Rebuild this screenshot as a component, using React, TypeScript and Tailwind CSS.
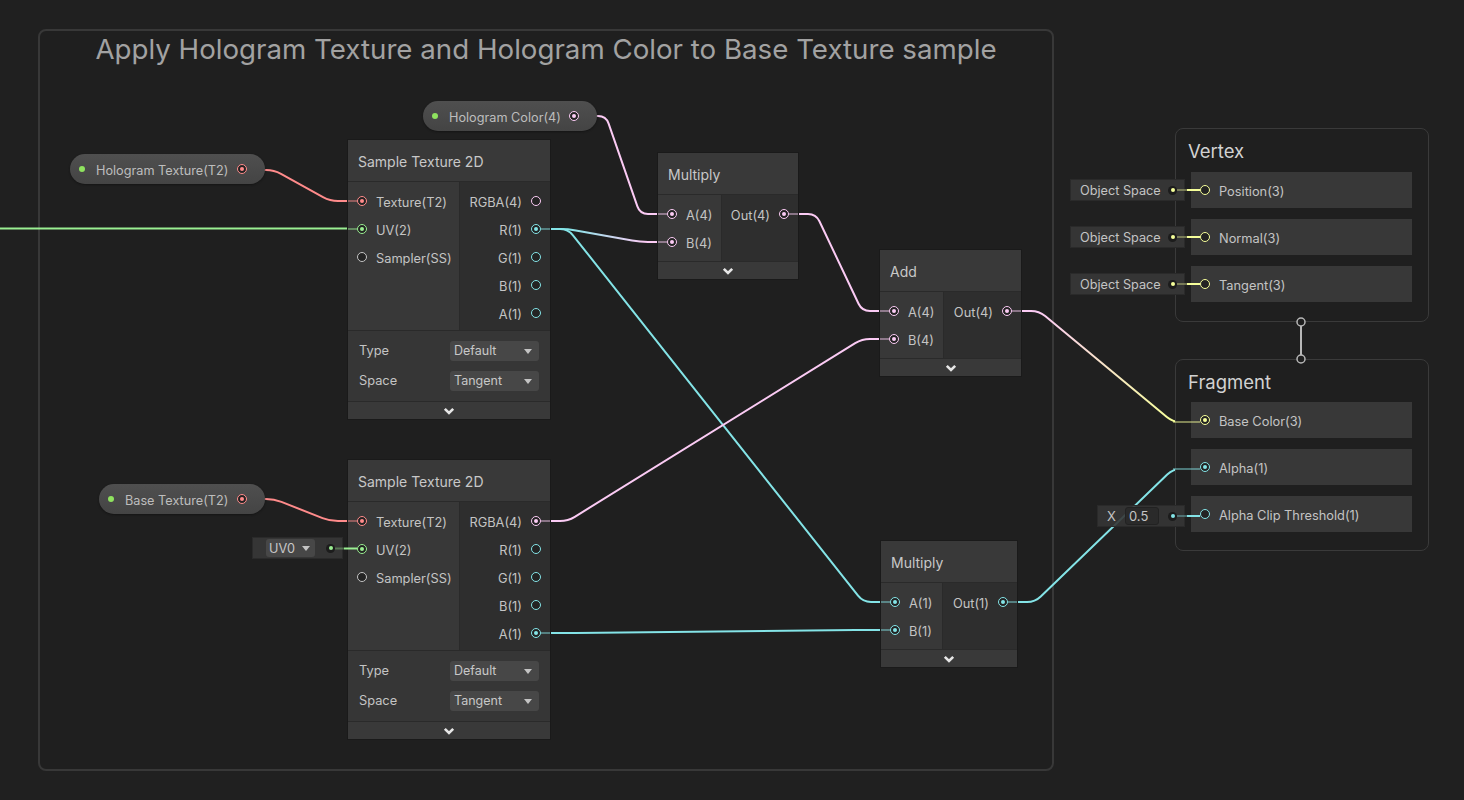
import React from "react";

type Kind = "v1" | "v2" | "v3" | "v4" | "tex" | "ss";

const ring: Record<Kind, string> = {
  v1: "border-[#84e4e7]",
  v2: "border-[#9aef92]",
  v3: "border-[#f6ff9a]",
  v4: "border-[#fbcbf4]",
  tex: "border-[#ff8b8b]",
  ss: "border-[#c4c4c4]",
};

const dot: Record<Kind, string> = {
  v1: "bg-[#84e4e7]",
  v2: "bg-[#9aef92]",
  v3: "bg-[#f6ff9a]",
  v4: "bg-[#fbcbf4]",
  tex: "bg-[#ff8b8b]",
  ss: "bg-[#c4c4c4]",
};

const hex: Record<Kind, string> = {
  v1: "#84e4e7",
  v2: "#9aef92",
  v3: "#f6ff9a",
  v4: "#fbcbf4",
  tex: "#ff8b8b",
  ss: "#c4c4c4",
};

type P = { label: string; kind: Kind; on?: boolean };

function Port({ kind, on }: { kind: Kind; on?: boolean }) {
  return (
    <span
      className={`flex h-[10px] w-[10px] shrink-0 items-center justify-center rounded-full border-[1.5px] bg-[#232323] ${ring[kind]}`}
    >
      {on && <span className={`h-[4px] w-[4px] rounded-full ${dot[kind]}`} />}
    </span>
  );
}

// small dark knob used by inline property drawers
function Knob({ kind }: { kind: Kind }) {
  return (
    <span className="flex h-[9px] w-[9px] items-center justify-center rounded-full bg-[#1c1c1c]">
      <span className={`h-[4px] w-[4px] rounded-full ${dot[kind]}`} />
    </span>
  );
}

function Chevron() {
  return (
    <svg width="12" height="8" viewBox="0 0 12 8">
      <polyline points="1.8,1.8 6,6 10.2,1.8" fill="none" stroke="#e6e6e6" strokeWidth="2.6" />
    </svg>
  );
}

function Caret() {
  return (
    <svg width="8" height="5" viewBox="0 0 8 5">
      <polygon points="0,0 8,0 4,5" fill="#c4c4c4" />
    </svg>
  );
}

function Dropdown({ value }: { value: string }) {
  return (
    <div className="flex h-[20px] w-[89px] items-center justify-between rounded-[3px] bg-[#474747] pl-[4px] pr-[7px] text-[12.5px] text-[#c8c8c8]">
      <span className="pt-[1px]">{value}</span>
      <Caret />
    </div>
  );
}

function Node({
  pos,
  title,
  ins,
  outs,
  inW,
  bodyPb,
  controls,
}: {
  pos: string;
  title: string;
  ins: P[];
  outs: P[];
  inW: string;
  bodyPb: string;
  controls?: { label: string; value: string }[];
}) {
  return (
    <div className={`absolute flex flex-col bg-[#2e2e2e] shadow-[0_0_0_1px_#1a1a1a] ${pos}`}>
      <div className="flex h-[42px] items-center border-b border-[#2a2a2a] bg-[#393939] px-[10px] pt-[1px] text-[14px] text-[#c8c8c8]">
        {title}
      </div>
      <div className="flex">
        <div className={`flex flex-col border-r border-[#2a2a2a] bg-[#383838] pt-[5px] ${bodyPb} ${inW}`}>
          {ins.map((p) => (
            <div key={p.label} className="flex h-[28px] items-center gap-[9px] pl-[9px] text-[12.8px] text-[#c4c4c4]">
              <Port kind={p.kind} on={p.on} />
              <span className="pt-[3px]">{p.label}</span>
            </div>
          ))}
        </div>
        <div className={`flex flex-1 flex-col pt-[5px] ${bodyPb}`}>
          {outs.map((p) => (
            <div key={p.label} className="flex h-[28px] items-center justify-end gap-[9px] pr-[9px] text-[12.8px] text-[#c4c4c4]">
              <span className="pt-[3px]">{p.label}</span>
              <Port kind={p.kind} on={p.on} />
            </div>
          ))}
        </div>
      </div>
      {controls && (
        <div className="flex flex-col gap-[10px] border-t border-[#2a2a2a] bg-[#363636] px-[11px] py-[10px]">
          {controls.map((c) => (
            <div key={c.label} className="flex h-[20px] items-center justify-between text-[12.8px] text-[#c4c4c4]">
              {c.label}
              <Dropdown value={c.value} />
            </div>
          ))}
        </div>
      )}
      <div className="flex h-[18px] items-center justify-center border-t border-[#2a2a2a] bg-[#393939]">
        <Chevron />
      </div>
    </div>
  );
}

function Pill({ pos, label, kind }: { pos: string; label: string; kind: Kind }) {
  return (
    <div
      className={`absolute flex h-[30px] items-center rounded-full bg-gradient-to-b from-[#4f4f4f] to-[#444444] pl-[9px] pr-[18px] text-[12.7px] text-[#bdbdbd] shadow-[0_1px_2px_#151515] ${pos}`}
    >
      <span className="h-[6px] w-[6px] rounded-full bg-[#8fe35f]" />
      <span className="ml-[11px] flex-1 pt-[3px]">{label}</span>
      <Port kind={kind} on />
    </div>
  );
}

function MasterBlock({
  pos,
  title,
  titleH,
  rows,
}: {
  pos: string;
  title: string;
  titleH: string;
  rows: P[];
}) {
  return (
    <div className={`absolute flex flex-col rounded-[8px] border border-[#3a3a3a] bg-[#1f1f1f] ${pos}`}>
      <div className={`flex items-center px-[12px] pt-[3px] text-[18.5px] text-[#d2d2d2] ${titleH}`}>{title}</div>
      <div className="flex flex-col gap-[11px] pl-[15px] pr-[16px]">
        {rows.map((r) => (
          <div key={r.label} className="flex h-[36px] items-center gap-[9px] bg-[#383838] pl-[9px] text-[12.8px] text-[#c4c4c4]">
            <Port kind={r.kind} on={r.on} />
            <span className="pt-[4px]">{r.label}</span>
          </div>
        ))}
      </div>
    </div>
  );
}

function ObjectSpace({ pos }: { pos: string }) {
  return (
    <div
      className={`absolute flex h-[22px] w-[115px] items-center justify-between border border-[#2a2a2a] bg-[#353535] pl-[9px] pr-[7px] text-[12.7px] text-[#c4c4c4] ${pos}`}
    >
      <span className="pt-[1px]">Object Space</span>
      <Knob kind="v3" />
    </div>
  );
}

// edge: horizontal lead-out, straight diagonal, horizontal lead-in, rounded corners
function edge(x1: number, y1: number, x2: number, y2: number, h = 32) {
  const a = x1 + h;
  const b = x2 - h;
  const dx = b - a;
  const dy = y2 - y1;
  const len = Math.hypot(dx, dy) || 1;
  const r = Math.min(8, len / 3);
  const ux = dx / len;
  const uy = dy / len;
  return `M${x1} ${y1} L${a - r} ${y1} Q${a} ${y1} ${a + r * ux} ${y1 + r * uy} L${b - r * ux} ${y2 - r * uy} Q${b} ${y2} ${b + r} ${y2} L${x2} ${y2}`;
}

const wires: { d: string; c: string }[] = [
  { d: "M0 228.5 L362 228.5", c: hex.v2 },
  { d: edge(242, 170, 362, 201), c: hex.tex },
  { d: edge(242, 499, 362, 521), c: hex.tex },
  { d: edge(574, 116, 672, 214), c: hex.v4 },
  { d: edge(536, 229, 895, 602), c: hex.v1 },
  { d: edge(536, 229, 672, 242), c: "url(#g1)" },
  { d: edge(784, 214, 894, 311), c: hex.v4 },
  { d: edge(536, 521, 894, 339), c: hex.v4 },
  { d: edge(536, 633, 895, 630), c: hex.v1 },
  { d: edge(1007, 311, 1205, 422), c: "url(#g2)" },
  { d: edge(1003, 602, 1205, 469), c: hex.v1 },
];

// short dim segments between a node edge and its port
const stubs: { x1: number; x2: number; y: number; c: string; o: number }[] = [
  { x1: 348, x2: 357, y: 201, c: hex.tex, o: 0.45 },
  { x1: 348, x2: 357, y: 229, c: hex.v2, o: 0.45 },
  { x1: 541, x2: 550, y: 229, c: hex.v1, o: 0.45 },
  { x1: 658, x2: 667, y: 214, c: hex.v4, o: 0.45 },
  { x1: 658, x2: 667, y: 242, c: hex.v4, o: 0.45 },
  { x1: 789, x2: 798, y: 214, c: hex.v4, o: 0.45 },
  { x1: 880, x2: 889, y: 311, c: hex.v4, o: 0.45 },
  { x1: 880, x2: 889, y: 339, c: hex.v4, o: 0.45 },
  { x1: 1012, x2: 1021, y: 311, c: hex.v4, o: 0.45 },
  { x1: 881, x2: 890, y: 602, c: hex.v1, o: 0.45 },
  { x1: 881, x2: 890, y: 630, c: hex.v1, o: 0.45 },
  { x1: 1008, x2: 1017, y: 602, c: hex.v1, o: 0.45 },
  { x1: 348, x2: 357, y: 521, c: hex.tex, o: 0.45 },
  { x1: 541, x2: 550, y: 521, c: hex.v4, o: 0.45 },
  { x1: 541, x2: 550, y: 633, c: hex.v1, o: 0.45 },
  { x1: 1173, x2: 1200, y: 422, c: hex.v3, o: 0.45 },
  { x1: 1173, x2: 1200, y: 469, c: hex.v1, o: 0.45 },
  // inline property drawers
  { x1: 335, x2: 344, y: 548.5, c: hex.v2, o: 0.35 },
  { x1: 344, x2: 357, y: 548.5, c: hex.v2, o: 1 },
  { x1: 1177, x2: 1187, y: 190, c: hex.v3, o: 0.35 },
  { x1: 1187, x2: 1200, y: 190, c: hex.v3, o: 1 },
  { x1: 1177, x2: 1187, y: 237, c: hex.v3, o: 0.35 },
  { x1: 1187, x2: 1200, y: 237, c: hex.v3, o: 1 },
  { x1: 1177, x2: 1187, y: 284, c: hex.v3, o: 0.35 },
  { x1: 1187, x2: 1200, y: 284, c: hex.v3, o: 1 },
  { x1: 1177, x2: 1187, y: 516, c: hex.v1, o: 0.35 },
  { x1: 1187, x2: 1200, y: 516, c: hex.v1, o: 1 },
];

const texIns: P[] = [
  { label: "Texture(T2)", kind: "tex", on: true },
  { label: "UV(2)", kind: "v2", on: true },
  { label: "Sampler(SS)", kind: "ss" },
];

const texControls = [
  { label: "Type", value: "Default" },
  { label: "Space", value: "Tangent" },
];

export default function App() {
  return (
    <div className="relative h-[800px] w-[1464px] overflow-hidden bg-[#202020] font-[Inter,sans-serif]">
      {/* Group */}
      <div className="absolute left-[38px] top-[29px] h-[742px] w-[1016px] rounded-[8px] border-2 border-[#383838] bg-[#1f1f1f]">
        <div className="text-center text-[27.7px] leading-[36px] text-[#a2a2a2]">
          Apply Hologram Texture and Hologram Color to Base Texture sample
        </div>
      </div>

      {/* Wires (below nodes) */}
      <svg className="pointer-events-none absolute left-0 top-0" width="1464" height="800">
        <defs>
          <linearGradient id="g1" gradientUnits="userSpaceOnUse" x1="568" y1="0" x2="645" y2="0">
            <stop offset="0" stopColor="#84e4e7" />
            <stop offset="1" stopColor="#fbcbf4" />
          </linearGradient>
          <linearGradient id="g2" gradientUnits="userSpaceOnUse" x1="1039" y1="0" x2="1173" y2="0">
            <stop offset="0" stopColor="#fbcbf4" />
            <stop offset="1" stopColor="#f6ff9a" />
          </linearGradient>
        </defs>
        {wires.map((w, i) => (
          <path key={i} d={w.d} fill="none" stroke={w.c} strokeWidth="2" />
        ))}
      </svg>

      {/* Properties */}
      <Pill pos="left-[70px] top-[154px] w-[195px]" label="Hologram Texture(T2)" kind="tex" />
      <Pill pos="left-[423px] top-[101px] w-[174px]" label="Hologram Color(4)" kind="v4" />
      <Pill pos="left-[99px] top-[484px] w-[166px]" label="Base Texture(T2)" kind="tex" />

      {/* Nodes */}
      <Node
        pos="left-[348px] top-[140px] w-[202px]"
        title="Sample Texture 2D"
        inW="w-[112px]"
        bodyPb="pb-[3px]"
        ins={texIns}
        outs={[
          { label: "RGBA(4)", kind: "v4" },
          { label: "R(1)", kind: "v1", on: true },
          { label: "G(1)", kind: "v1" },
          { label: "B(1)", kind: "v1" },
          { label: "A(1)", kind: "v1" },
        ]}
        controls={texControls}
      />
      <Node
        pos="left-[348px] top-[460px] w-[202px]"
        title="Sample Texture 2D"
        inW="w-[112px]"
        bodyPb="pb-[3px]"
        ins={texIns}
        outs={[
          { label: "RGBA(4)", kind: "v4", on: true },
          { label: "R(1)", kind: "v1" },
          { label: "G(1)", kind: "v1" },
          { label: "B(1)", kind: "v1" },
          { label: "A(1)", kind: "v1", on: true },
        ]}
        controls={texControls}
      />
      <Node
        pos="left-[658px] top-[153px] w-[140px]"
        title="Multiply"
        inW="w-[64px]"
        bodyPb="pb-[5px]"
        ins={[
          { label: "A(4)", kind: "v4", on: true },
          { label: "B(4)", kind: "v4", on: true },
        ]}
        outs={[{ label: "Out(4)", kind: "v4", on: true }]}
      />
      <Node
        pos="left-[880px] top-[250px] w-[141px]"
        title="Add"
        inW="w-[64px]"
        bodyPb="pb-[5px]"
        ins={[
          { label: "A(4)", kind: "v4", on: true },
          { label: "B(4)", kind: "v4", on: true },
        ]}
        outs={[{ label: "Out(4)", kind: "v4", on: true }]}
      />
      <Node
        pos="left-[881px] top-[541px] w-[136px]"
        title="Multiply"
        inW="w-[62px]"
        bodyPb="pb-[5px]"
        ins={[
          { label: "A(1)", kind: "v1", on: true },
          { label: "B(1)", kind: "v1", on: true },
        ]}
        outs={[{ label: "Out(1)", kind: "v1", on: true }]}
      />

      {/* UV0 drawer */}
      <div className="absolute left-[252px] top-[537px] flex h-[22px] w-[91px] items-center justify-between border border-[#2a2a2a] bg-[#353535] pl-[13px] pr-[7px]">
        <div className="flex h-[18px] w-[49px] items-center justify-between rounded-[3px] bg-[#474747] pl-[3px] pr-[5px] text-[12.7px] text-[#c8c8c8]">
          <span className="pt-[1px]">UV0</span>
          <Caret />
        </div>
        <Knob kind="v2" />
      </div>

      {/* Master stack */}
      <MasterBlock
        pos="left-[1175px] top-[128px] h-[194px] w-[254px]"
        title="Vertex"
        titleH="h-[43px]"
        rows={[
          { label: "Position(3)", kind: "v3" },
          { label: "Normal(3)", kind: "v3" },
          { label: "Tangent(3)", kind: "v3" },
        ]}
      />
      <MasterBlock
        pos="left-[1175px] top-[359px] h-[192px] w-[254px]"
        title="Fragment"
        titleH="h-[42px]"
        rows={[
          { label: "Base Color(3)", kind: "v3", on: true },
          { label: "Alpha(1)", kind: "v1", on: true },
          { label: "Alpha Clip Threshold(1)", kind: "v1" },
        ]}
      />

      <ObjectSpace pos="left-[1070px] top-[179px]" />
      <ObjectSpace pos="left-[1070px] top-[226px]" />
      <ObjectSpace pos="left-[1070px] top-[273px]" />

      <div className="absolute left-[1097px] top-[505px] flex h-[22px] w-[88px] items-center border border-[#2a2a2a] bg-[#353535]/90 pl-[9px] pr-[7px] text-[13px] text-[#c4c4c4]">
        <span className="w-[18px] pt-[1px]">X</span>
        <span className="flex h-[18px] w-[34px] items-center rounded-[3px] border border-[#222222] bg-[#2a2a2a] pl-[3px] pt-[1px]">
          0.5
        </span>
        <span className="ml-auto">
          <Knob kind="v1" />
        </span>
      </div>

      {/* Stubs and stack connector (above nodes) */}
      <svg className="pointer-events-none absolute left-0 top-0" width="1464" height="800">
        {stubs.map((s, i) => (
          <line key={i} x1={s.x1} y1={s.y} x2={s.x2} y2={s.y} stroke={s.c} strokeOpacity={s.o} strokeWidth="2" />
        ))}
        <line x1="1301" y1="326" x2="1301" y2="355" stroke="#b8b8b8" strokeWidth="2" />
        <circle cx="1301" cy="322" r="4" fill="#1f1f1f" stroke="#b8b8b8" strokeWidth="1.5" />
        <circle cx="1301" cy="359" r="4" fill="#1f1f1f" stroke="#b8b8b8" strokeWidth="1.5" />
      </svg>
    </div>
  );
}
